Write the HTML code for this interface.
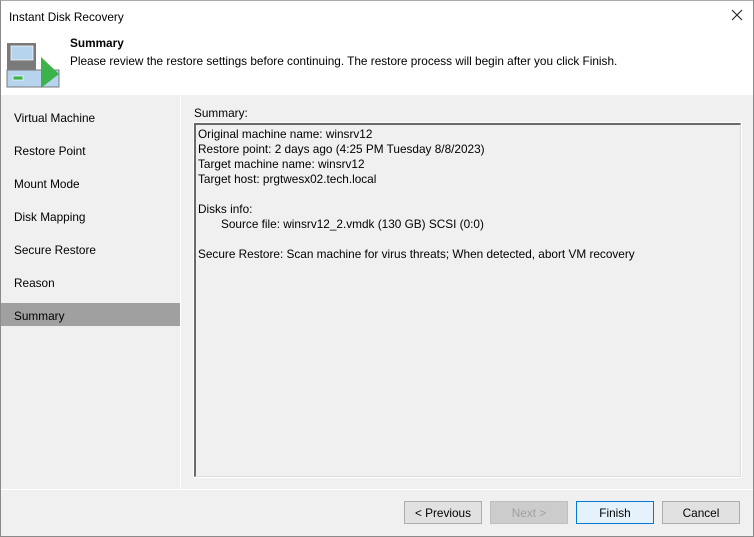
<!DOCTYPE html>
<html><head><style>
*{margin:0;padding:0;box-sizing:border-box}
body{width:754px;height:537px;position:relative;background:#f0f0f0;font-family:"Liberation Sans",sans-serif;font-size:11.8px;color:#000;overflow:hidden}
.abs{position:absolute}
#win{position:absolute;left:0;top:0;width:754px;height:537px;border:1px solid #8a8a8a;border-top:1px solid #aaa}
.nav{position:absolute;left:14px;white-space:nowrap}
.btn{position:absolute;top:501px;width:78px;height:23px;border:1px solid #adadad;background:#e1e1e1;text-align:center;line-height:22px}
</style></head><body>
<div class="abs" style="left:0;top:0;width:754px;height:95px;background:#fff"></div>
<div class="abs" style="left:9px;top:10px">Instant Disk Recovery</div>
<svg class="abs" style="left:730px;top:8px" width="14" height="14"><path d="M2 2L12 12M12 2L2 12" stroke="#222" stroke-width="1.1"/></svg>
<svg class="abs" style="left:6px;top:41px" width="56" height="48">
<rect x="1" y="2" width="29" height="27" fill="#7a7a7a"/>
<rect x="5" y="5" width="22" height="14" fill="#b7d4ee" stroke="#fff" stroke-width="0.7"/>
<rect x="1" y="29" width="52" height="17" fill="#b7d4ee" stroke="#7a7a7a"/>
<rect x="7" y="35" width="10" height="4" fill="#3cb34a" stroke="#fff" stroke-width="0.7"/>
<path d="M35 16L53 33L35 47Z" fill="#3cb34a"/>
</svg>
<div class="abs" style="left:70px;top:36px;font-weight:bold">Summary</div>
<div class="abs" style="left:70px;top:54px">Please review the restore settings before continuing. The restore process will begin after you click Finish.</div>
<div class="abs" style="left:180px;top:95px;width:1px;height:394px;background:#fff"></div>
<div class="abs" style="left:0;top:303px;width:180px;height:23px;background:#a0a0a0"></div>
<div class="nav" style="top:111px">Virtual Machine</div>
<div class="nav" style="top:144px">Restore Point</div>
<div class="nav" style="top:177px">Mount Mode</div>
<div class="nav" style="top:210px">Disk Mapping</div>
<div class="nav" style="top:243px">Secure Restore</div>
<div class="nav" style="top:276px">Reason</div>
<div class="nav" style="top:309px">Summary</div>
<div class="abs" style="left:194px;top:106px">Summary:</div>
<div class="abs" style="left:194px;top:123px;width:547px;height:354px;border-left:2px solid #6a6a6a;border-top:2px solid #6a6a6a;border-right:1px solid #dcdcdc;border-bottom:1px solid #dcdcdc;outline:1px solid #fff"></div>
<div class="abs" style="left:198px;top:127px;line-height:15px;white-space:pre">Original machine name: winsrv12
Restore point: 2 days ago (4:25 PM Tuesday 8/8/2023)
Target machine name: winsrv12
Target host: prgtwesx02.tech.local

Disks info:
<span style="padding-left:23px">Source file: winsrv12_2.vmdk (130 GB) SCSI (0:0)</span>

Secure Restore: Scan machine for virus threats; When detected, abort VM recovery</div>
<div class="abs" style="left:0;top:489px;width:754px;height:1px;background:#fff"></div>
<div class="btn" style="left:404px">&lt; Previous</div>
<div class="btn" style="left:490px;background:#cccccc;border-color:#bfbfbf;color:#a0a0a0">Next &gt;</div>
<div class="btn" style="left:576px;background:#e5f1fb;border-color:#0078d7">Finish</div>
<div class="btn" style="left:662px">Cancel</div>
<div id="win"></div>
</body></html>
